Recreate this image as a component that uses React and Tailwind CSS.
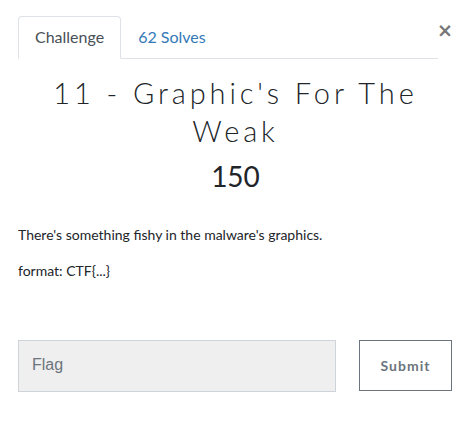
export default function App() {
  return (
    <div className="w-[471px] h-[421px] bg-white relative overflow-hidden" style={{ fontFamily: "Lato, 'Noto Sans', sans-serif" }}>
      <div className="flex items-start pt-[16px] pl-[18px]">
        <div className="w-[420px] flex border-b border-[#dee2e6]">
          <div className="px-4 pt-[8px] pb-[8px] border border-[#dee2e6] border-b-white rounded-t-[4px] -mb-px text-[16px] leading-[24px] text-[#495057] bg-white">
            Challenge
          </div>
          <div className="px-4 pt-[8px] pb-[8px] border border-transparent text-[16px] leading-[24px] text-[#3479b7]">
            62 Solves
          </div>
        </div>
        <div className="-ml-[1px] mt-[5px] w-[14px] text-[#777] text-[19px] leading-[18px] font-bold text-center" style={{ fontFamily: "'DejaVu Sans', sans-serif" }}>×</div>
      </div>
      <div className="mt-[15px] px-[28px] text-center text-[#212529] text-[29px] leading-[38px] font-light tracking-[3.9px]">
        11 - Graphic's For The Weak
      </div>
      <div className="mt-[8px] text-center text-[#212529] text-[28px] leading-[36px]">150</div>
      <div className="mt-[31px] px-[18px] text-[14px] leading-[20px] text-[#212529]">
        <p>There's something fishy in the malware's graphics.</p>
        <p className="mt-[16px]">format: CTF{"{...}"}</p>
      </div>
      <div className="mt-[59px] px-[18px] flex items-start">
        <div className="w-[318px] h-[52px] bg-[#efefef] border border-[#ced4da] flex items-center pl-[13px] pb-[3px] text-[16px] text-[#6c757d]" style={{ fontFamily: "'Liberation Sans', Arial, sans-serif" }}>
          Flag
        </div>
        <div className="ml-[23px] w-[93px] h-[51px] border border-[#6c757d] flex items-center justify-center text-[14px] font-bold tracking-[1px] text-[#6c757d]">
          Submit
        </div>
      </div>
    </div>
  );
}
